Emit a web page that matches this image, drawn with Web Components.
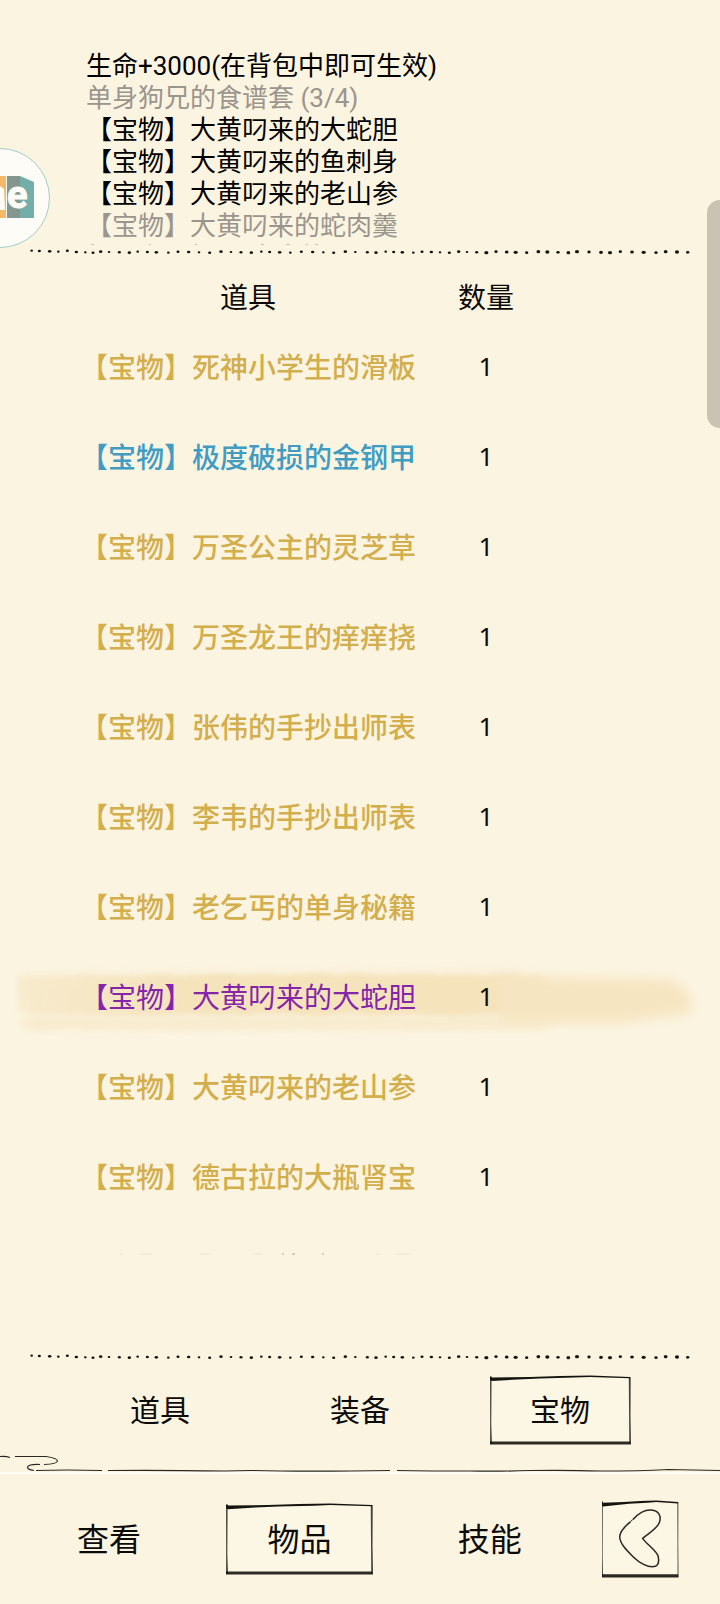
<!DOCTYPE html>
<html lang="zh-CN">
<head>
<meta charset="utf-8">
<meta name="viewport" content="width=device-width, initial-scale=1">
<title>宝物</title>
<style>
  body {
    margin: 0;
    background: #fbf4e1;
    color: #0c0b09;
    font-family: Roboto, "Noto Sans CJK SC", sans-serif;
  }
</style>
</head>
<body>
<bag-screen></bag-screen>

<script>
const define = (name, html, setup) => {
  const template = document.createElement('template');
  template.innerHTML = html;
  customElements.define(name, class extends HTMLElement {
    constructor() {
      super();
      this.attachShadow({ mode: 'open' });
      this.shadowRoot.appendChild(template.content.cloneNode(true));
    }
    connectedCallback() {
      if (setup) setup(this, this.shadowRoot);
    }
  });
};

// Hand-inked dotted rule, one entry per dot
const DOTS = [
  95, 118, 149, 175, 202, 229, 256, 279, 302, 327, 358, 388, 413, 442, 469, 505, 534, 566, 597, 629,
  663, 693, 723, 754, 784, 809, 839, 871, 904, 938, 970, 1001, 1036, 1066, 1102, 1128, 1157, 1181,
  1207, 1240, 1266, 1294, 1320, 1348, 1376, 1401, 1430, 1459, 1488, 1520, 1547, 1580, 1615, 1642,
  1674, 1705, 1731, 1767, 1803, 1830, 1861, 1896, 1931, 1968, 1997, 2031, 2063
];

define('dotted-rule', `
  <style>
    :host { display: block; }
    svg { display: block; width: 100%; }
  </style>
  <svg viewBox="0 0 2160 18" fill="#14120e" aria-hidden="true"></svg>
`, (el, root) => {
  root.querySelector('svg').innerHTML = DOTS.map((x, i) => {
    const big = x > 1450 ? 1 : 0;
    const rx = 4 + (i * 7 % 3) * 0.6 + big;
    const y = 9 + (i * 5 % 4) - (i < 5 ? 4 : 1);
    return `<ellipse cx="${x}" cy="${y}" rx="${rx}" ry="${3.3 + (i % 3) * 0.4 + big}"/>`;
  }).join('');
});

define('item-effects', `
  <style>
    :host { display: block; padding: 0 86px; font-size: 26px; line-height: 32px; color: #000; }
    p, ul { margin: 0; padding: 0; list-style: none; white-space: nowrap; }
    .off { color: #9a958d; }
    svg { display: block; }
  </style>
  <p>生命+3000(在背包中即可生效)</p>
  <p class="off">单身狗兄的食谱套 (3/4)</p>
  <ul>
    <li>【宝物】大黄叼来的大蛇胆</li>
    <li>【宝物】大黄叼来的鱼刺身</li>
    <li>【宝物】大黄叼来的老山参</li>
    <li class="off">【宝物】大黄叼来的蛇肉羹</li>
  </ul>
  <!-- tips of the line that is scrolled away -->
  <svg width="240" height="7" stroke="#a39d8f" opacity=".6" aria-hidden="true">
    <path d="M5 2.500h3M63 2.500h2M109 2.500h2M175 2.500h3M200 2.500h4M220 2.500h2M229 2.500h3"/>
  </svg>
`);

const ITEMS = [
  ['死神小学生的滑板', 'gold'],
  ['极度破损的金钢甲', 'blue'],
  ['万圣公主的灵芝草', 'gold'],
  ['万圣龙王的痒痒挠', 'gold'],
  ['张伟的手抄出师表', 'gold'],
  ['李韦的手抄出师表', 'gold'],
  ['老乞丐的单身秘籍', 'gold'],
  ['大黄叼来的大蛇胆', 'purple'],
  ['大黄叼来的老山参', 'gold'],
  ['德古拉的大瓶肾宝', 'gold']
];

const BRUSH = `
  <svg class="brush" viewBox="0 0 720 90" preserveAspectRatio="none" aria-hidden="true">
    <defs>
      <filter id="soft" x="-5%" y="-40%" width="110%" height="180%">
        <feTurbulence type="fractalNoise" baseFrequency="0.03 0.2" numOctaves="2" seed="4" result="n"/>
        <feDisplacementMap in="SourceGraphic" in2="n" scale="6" xChannelSelector="R" yChannelSelector="G"/>
        <feGaussianBlur stdDeviation="2"/>
      </filter>
      <filter id="haze" x="-5%" y="-40%" width="110%" height="180%"><feGaussianBlur stdDeviation="6"/></filter>
      <linearGradient id="ink">
        <stop offset="0" stop-color="#f5e5c0" stop-opacity=".4"/>
        <stop offset=".3" stop-color="#f5e3bc"/>
        <stop offset=".85" stop-color="#f5e3bc"/>
        <stop offset="1" stop-color="#f5e4bf" stop-opacity=".1"/>
      </linearGradient>
    </defs>
    <path filter="url(#haze)" fill="#f8ecd0" opacity=".8" d="M20 24 L520 20 L540 76 L30 78Z"/>
    <path filter="url(#soft)" fill="url(#ink)" d="M17 25 L330 23 L540 24 L590 62 L360 63 L17 63Z"/>
    <path filter="url(#soft)" fill="#f7e9c8" opacity=".5" d="M20 68 L380 68 L540 64 L580 68 L540 79 L20 78Z"/>
    <path filter="url(#haze)" fill="#f6e5c1" d="M500 26 L670 28 Q698 44 690 62 L620 72 L500 70Z"/>
  </svg>`;

define('item-table', `
  <style>
    :host { display: block; font-size: 28px; }
    table { width: 100%; table-layout: fixed; border-collapse: collapse; }
    .name { width: 416px; }
    .count { width: 140px; }
    th, td { padding: 0; text-align: center; white-space: nowrap; }
    th { height: 46px; padding-bottom: 2px; font-weight: 400; }
    th:first-child, td:first-child { padding-left: 80px; }
    tbody tr { position: relative; height: 90px; }
    td { font-weight: 500; }
    td.num { font: 400 26px "Noto Sans", sans-serif; }
    .gold { color: #d3ae4c; }
    .blue { color: #409cc2; }
    .purple { color: #8425aa; font-weight: 400; }
    .brush { position: absolute; left: 0; top: 0; width: 100%; height: 100%; z-index: -1; }
    .next { display: block; padding: 32px 0 0 80px; }
  </style>
  <table>
    <colgroup><col class="name"><col class="count"><col></colgroup>
    <thead><tr><th scope="col">道具</th><th scope="col">数量</th><td></td></tr></thead>
    <tbody></tbody>
  </table>
  <!-- edge of the row below the fold -->
  <svg class="next" width="336" height="2" stroke="#b5ab8e" aria-hidden="true">
    <path d="M202 1h2M212 1h3M242 1h2" />
    <path d="M40 1h3M60 1h12M120 1h10M174 1h8M296 1h4M316 1h14" opacity=".25"/>
  </svg>
`, (el, root) => {
  root.querySelector('tbody').innerHTML = ITEMS.map(([name, tone]) => `
    <tr>
      <td class="${tone}">${tone === 'purple' ? BRUSH : ''}【宝物】${name}</td>
      <td class="num">1</td>
      <td></td>
    </tr>`).join('');
});

// Button with an optional brushed frame (attribute "framed")
define('ink-button', `
  <style>
    :host { display: block; }
    button {
      position: relative;
      isolation: isolate;
      display: flex;
      align-items: center;
      justify-content: center;
      width: 100%;
      height: 100%;
      padding: 0;
      border: 0;
      background: none;
      color: inherit;
      font: inherit;
    }
    .label { padding-bottom: 4px; }
    .frame { display: none; position: absolute; z-index: -1; left: 0; top: 0; width: 100%; height: 100%; overflow: visible; }
    :host([framed]) .frame { display: block; }
  </style>
  <button type="button">
    <svg class="frame" viewBox="0 0 140 68" preserveAspectRatio="none" aria-hidden="true">
      <path fill="#fdf7e8" d="M1 2L139 2L139 67L1 67Z" opacity=".5"/>
      <g fill="#16140f">
        <path d="M0 1L1 0L2 1.500L40 1L70 0L100 -.4L140 1L140 2.200L100 1L84 1.600L50 2.400L28 3.500L2 5L0 4Z"/>
        <path d="M0 65.600L140 65.600L141 68.500L0 68.500Z" opacity=".9"/>
        <path d="M138.800 1L140.700 1L140.500 40L141 68L139.300 68L139 30Z" opacity=".8"/>
        <path d="M0 1L1.600 1L1.300 48L2 68L0 68L.1 50Z" opacity=".75"/>
      </g>
    </svg>
    <slot name="icon"></slot>
    <span class="label"><slot></slot></span>
  </button>
`);

define('cloud-line', `
  <style>
    :host { display: block; border-bottom: 2px solid #fffdf8; }
    svg { display: block; width: 100%; height: 22px; }
  </style>
  <svg viewBox="0 0 720 22" preserveAspectRatio="none" fill="none" stroke="#2b2821" stroke-width="1.200" aria-hidden="true">
    <path d="M0 6.500Q6 6 10 7.500M15 6.500H46Q57 8 57.500 11Q57 14 44 14.500M40 14.500Q29 14 27.500 17Q27 19.500 34 20.500"/>
    <path d="M36 20.500Q66 19.500 102 20.500M108 20.500Q160 20 225 21Q250 20 280 21Q330 21.500 390 20.500M397 20.500Q430 21 470 21Q500 21.500 530 20.500Q570 20 600 21Q640 21 668 19.500Q695 20 720 20.500"/>
  </svg>
`);

define('float-badge', `
  <style>
    :host { position: absolute; left: 0; top: 148px; }
    svg { display: block; }
  </style>
  <svg width="51" height="101" viewBox="0 0 51 101" aria-hidden="true">
    <circle cx="0" cy="50" r="49.500" fill="#fefcf6" stroke="#a3cdc3"/>
    <path fill="#f5b868" d="M0 28H6V70H0Z"/>
    <path fill="#fefcf6" d="M0 38L4 41L5 62L0 62Z"/>
    <path fill="#84978f" d="M7 28H20V70H7Z"/>
    <path fill="#73aeaa" d="M20 28L34 34V70H20Z"/>
    <text x="7" y="60" font-family="Roboto, sans-serif" font-size="38" font-weight="700" fill="#fefcf6" stroke="#fefcf6" stroke-width="1">e</text>
  </svg>
`);

define('side-handle', `
  <style>
    :host { position: absolute; right: 0; top: 200px; width: 13px; height: 228px; border-radius: 13px 0 0 13px; background: #cac3b3; }
  </style>
`);

define('bag-screen', `
  <style>
    :host { display: block; position: relative; z-index: 0; padding-top: 50px; overflow: hidden; }
    item-table { padding-top: 18px; }
    .lower { padding-top: 99px; }
    .tabs {
      display: grid;
      grid-template-columns: repeat(3, 1fr);
      justify-items: center;
      padding: 16px 60px 6px;
      font-size: 30px;
    }
    .tabs ink-button { width: 140px; height: 68px; }
    .menu {
      display: grid;
      grid-template-columns: 19fr 19fr 19fr 11fr;
      justify-items: center;
      align-items: center;
      height: 130px;
      padding: 0 25px 0 14px;
      font-size: 32px;
    }
    .menu ink-button { width: 146px; height: 70px; }
    .menu .back { width: 76px; height: 76px; }
    .back svg { display: block; }
  </style>
  <item-effects></item-effects>
  <dotted-rule></dotted-rule>
  <item-table></item-table>
  <dotted-rule class="lower"></dotted-rule>
  <nav class="tabs" aria-label="分类">
    <ink-button>道具</ink-button>
    <ink-button>装备</ink-button>
    <ink-button framed>宝物</ink-button>
  </nav>
  <cloud-line></cloud-line>
  <nav class="menu" aria-label="菜单">
    <ink-button>查看</ink-button>
    <ink-button framed>物品</ink-button>
    <ink-button>技能</ink-button>
    <ink-button class="back" framed>
      <svg slot="icon" width="76" height="76" viewBox="0 0 228 228" fill="none" stroke="#2a2722" stroke-width="4.500" aria-hidden="true">
        <path d="M92 56C110 36 132 26 148 27C170 29 178 44 173 62C168 82 140 96 122 112C134 130 160 146 168 164C172 180 168 192 160 196C140 202 112 186 94 168C74 148 54 128 53 108C54 90 68 76 86 62"/>
        <path d="M88 60l2-2"/>
      </svg>
    </ink-button>
  </nav>
  <float-badge></float-badge>
  <side-handle></side-handle>
`);
</script>
</body>
</html>
